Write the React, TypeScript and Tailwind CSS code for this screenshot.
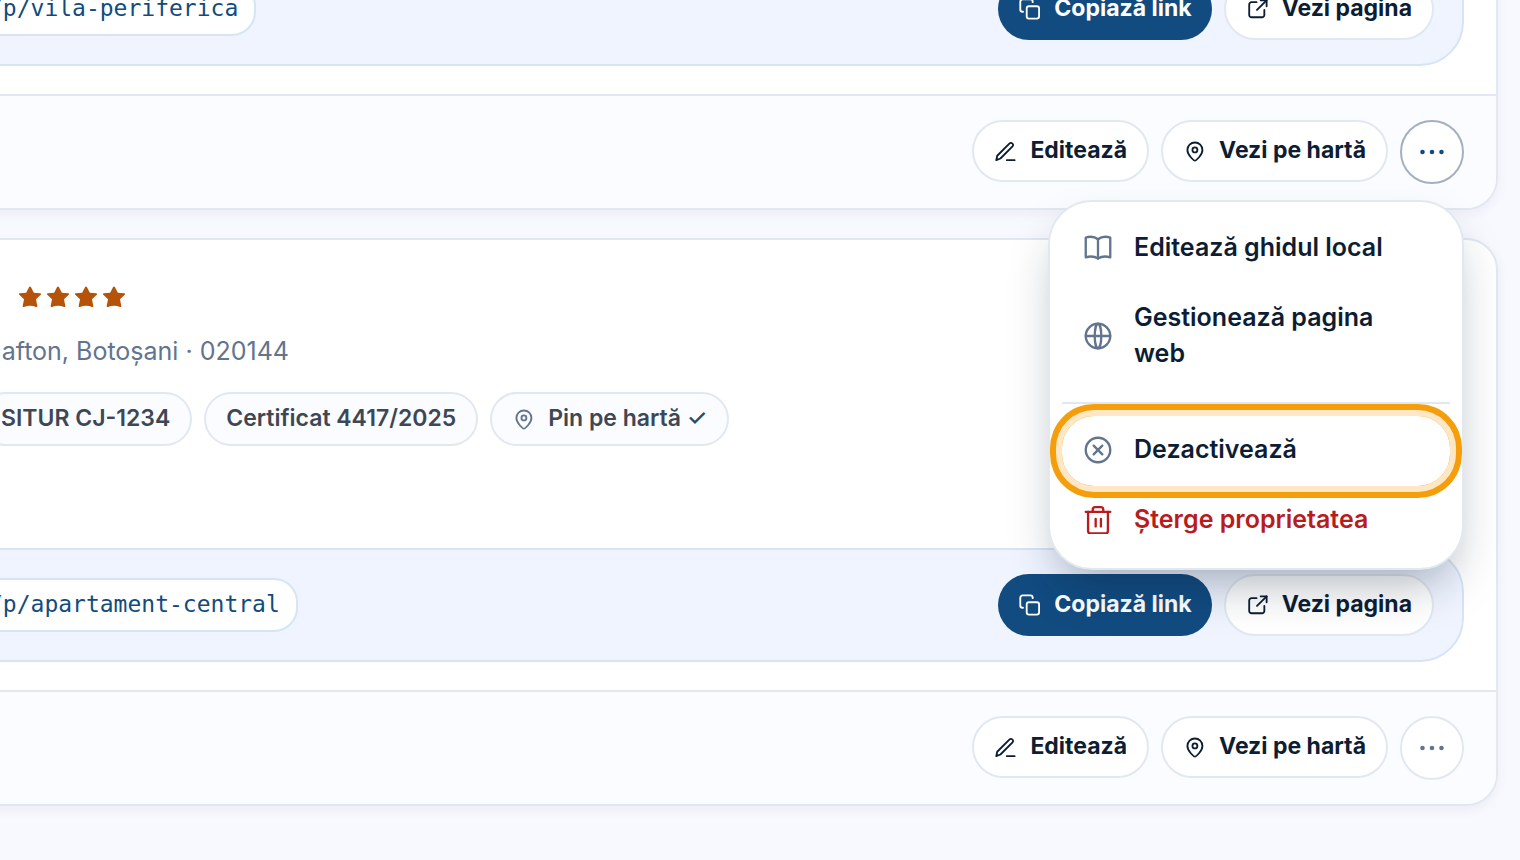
import type { ReactNode } from 'react';

type Property = {
  slug: string;
  stars: number;
  location: string;
  badges: string[];
  menuOpen: boolean;
};

type IconProps = {
  className?: string;
};

type ActionButtonProps = {
  icon: ReactNode;
  label: string;
  primary?: boolean;
};

type MenuItemProps = {
  icon: ReactNode;
  label: string;
  danger?: boolean;
  highlighted?: boolean;
};

const PROPERTIES: Property[] = [
  {
    slug: '/p/vila-periferica',
    stars: 0,
    location: '',
    badges: [],
    menuOpen: true,
  },
  {
    slug: '/p/apartament-central',
    stars: 4,
    location: 'Ungafton, Botoșani · 020144',
    badges: ['SITUR CJ-1234', 'Certificat 4417/2025'],
    menuOpen: false,
  },
];

function Icon({ className = '', children }: IconProps & { children: ReactNode }) {
  return (
    <svg
      className={`shrink-0 ${className}`}
      viewBox="0 0 24 24"
      fill="none"
      stroke="currentColor"
      strokeWidth="2"
      strokeLinecap="round"
      strokeLinejoin="round"
      aria-hidden="true"
    >
      {children}
    </svg>
  );
}

function PenIcon() {
  return (
    <Icon className="size-[22px]">
      <path d="M2.500 22l1-4.800L17 3.700a2 2 0 0 1 2.900 0l.3.300a2 2 0 0 1 0 2.900L7 20.200z" />
      <path d="M14 22h8.500" />
    </Icon>
  );
}

function PinIcon({ className = '' }: IconProps) {
  return (
    <Icon className={`size-[22px] ${className}`}>
      <path d="M13 22.500c-1.100 0-8.200-6-8.200-11.600a8.200 8.200 0 0 1 16.400 0C21.200 16.500 14.100 22.500 13 22.500z" />
      <circle cx="13" cy="10.800" r="2.700" />
    </Icon>
  );
}

function CopyIcon() {
  return (
    <Icon className="size-[22px]">
      <rect x="9.500" y="9" width="13.500" height="13.500" rx="2.500" />
      <path d="M5.500 15H5a2.500 2.500 0 0 1-2.500-2.500V4A2.500 2.500 0 0 1 5 1.500h8.500A2.500 2.500 0 0 1 16 4v.5" />
    </Icon>
  );
}

function ExternalIcon() {
  return (
    <Icon className="size-[22px]">
      <path d="M11.500 4.500H6A2.500 2.500 0 0 0 3.500 7v11.500A2.500 2.500 0 0 0 6 21h11.500a2.500 2.500 0 0 0 2.500-2.500V13" />
      <path d="M16 2.500h6.500V9" />
      <path d="M22.500 2.500L12 13" />
    </Icon>
  );
}

function DotsIcon() {
  return (
    <svg className="size-7" viewBox="0 0 28 28" fill="currentColor" aria-hidden="true">
      <circle cx="4.500" cy="14" r="2.300" />
      <circle cx="14" cy="14" r="2.300" />
      <circle cx="23.500" cy="14" r="2.300" />
    </svg>
  );
}

function StarIcon() {
  return (
    <svg className="size-[22px]" viewBox="0 0 24 24" fill="currentColor" aria-hidden="true">
      <path d="M12 .5c.5 0 .8.300 1.100.8l3.100 6 7 .7c.9.100 1.200 1 .5 1.600l-5.200 4.800 1.500 7.400c.1.900-.6 1.400-1.400 1.100-2.200-.9-4.400-1.300-6.600-1.300s-4.400.4-6.600 1.300c-.8.300-1.500-.2-1.400-1.100l1.500-7.400L.3 9.600C-.4 9-.1 8.100.8 8l7-.7 3.100-6c.3-.5.600-.8 1.100-.8z" />
    </svg>
  );
}

function BookIcon() {
  return (
    <Icon className="size-7">
      <path d="M12 4.500C9.500 2.500 5 2 1.500 3v17c3.500-1 8-.6 10.500 1 2.500-1.600 7-2 10.500-1V3C19 2 14.500 2.500 12 4.500z" />
      <path d="M12 4.500V21" />
    </Icon>
  );
}

function GlobeIcon() {
  return (
    <Icon className="size-7">
      <circle cx="12" cy="12" r="10.500" />
      <ellipse cx="12" cy="12" rx="2.800" ry="10.500" />
      <path d="M1.500 12h21" />
    </Icon>
  );
}

function CloseCircleIcon() {
  return (
    <Icon className="size-7">
      <circle cx="12" cy="12" r="10.500" />
      <path d="M8.300 8.300l7.400 7.400M15.700 8.300l-7.400 7.400" />
    </Icon>
  );
}

function TrashIcon() {
  return (
    <Icon className="size-7">
      <path d="M1.500 5h21" />
      <path d="M3.500 5v16.500a2 2 0 0 0 2 2h13a2 2 0 0 0 2-2V5" />
      <path d="M7.500 5V3a2 2 0 0 1 2-2h5a2 2 0 0 1 2 2v2" />
      <path d="M10 11v6.500M14.500 11v6.500" />
    </Icon>
  );
}

function ActionButton({ icon, label, primary = false }: ActionButtonProps) {
  return (
    <button
      type="button"
      className={`flex h-[62px] items-center gap-[14px] rounded-full px-5 text-[23px] leading-8 font-bold ${
        primary ? 'bg-[#114b80] text-white' : 'border-2 border-slate-200 bg-white text-[#0d1d33]'
      }`}
    >
      {icon}
      <span className="pb-0.5">{label}</span>
    </button>
  );
}

function Chip({ children }: { children: ReactNode }) {
  return (
    <span className="flex h-[54px] items-center gap-[14px] rounded-full border-2 border-slate-200 bg-[#fbfcff] px-5 text-[23px] leading-8 font-semibold text-[#3d4755]">
      {children}
    </span>
  );
}

function MenuItem({ icon, label, danger = false, highlighted = false }: MenuItemProps) {
  return (
    <button
      type="button"
      role="menuitem"
      className={`flex w-full items-center gap-[22px] rounded-4xl px-[22px] pt-[15px] pb-[17px] text-left text-[25px] leading-9 font-semibold ${
        danger ? 'text-[#b91c1c]' : 'text-[#0d1d33]'
      } ${highlighted ? 'shadow-[0_0_0_6px_#fde7c4,0_0_0_12px_#f59e0b]' : ''}`}
    >
      <span className={danger ? '' : 'text-slate-500'}>{icon}</span>
      <span className="pb-0.5">{label}</span>
    </button>
  );
}

function PropertyMenu() {
  return (
    <div
      role="menu"
      className="absolute top-full right-0 z-10 mt-4 w-[416px] rounded-[44px] border-2 border-slate-200 bg-white p-3 shadow-[0_24px_48px_-12px_rgba(13,29,51,0.34)]"
    >
      <MenuItem icon={<BookIcon />} label="Editează ghidul local" />
      <MenuItem icon={<GlobeIcon />} label="Gestionează pagina web" />
      <hr className="my-3 border-t-2 border-slate-200" />
      <MenuItem icon={<CloseCircleIcon />} label="Dezactivează" highlighted />
      <MenuItem icon={<TrashIcon />} label="Șterge proprietatea" danger />
    </div>
  );
}

function PropertyCard({ property }: { property: Property }) {
  return (
    <article className="rounded-4xl border-2 border-slate-200 bg-white shadow-[0_4px_12px_rgba(13,29,51,0.05)]">
      {/* Details */}
      {property.location && (
        <div className="pt-[46px] pb-[102px]">
          <div className="flex gap-1.5 pl-[127px] text-[#b45309]" role="img" aria-label={`${property.stars} stele`}>
            {Array.from({ length: property.stars }, (_, i) => (
              <StarIcon key={i} />
            ))}
          </div>
          <p className="mt-6 pl-[61px] text-[25px] leading-[38px] text-slate-500">{property.location}</p>
          <div className="mt-[22px] flex gap-3 pl-[87px]">
            {property.badges.map((badge) => (
              <Chip key={badge}>
                <span className="pb-0.5">{badge}</span>
              </Chip>
            ))}
            <Chip>
              <PinIcon className="text-slate-500" />
              <span className="pb-0.5">
                Pin pe hartă <span className="font-medium">✓</span>
              </span>
            </Chip>
          </div>
        </div>
      )}

      {/* Public link */}
      <div className="mr-8 mb-7 flex items-center justify-between rounded-[44px] border-2 border-[#d6e4f5] bg-[#eff4ff] py-6 pr-7 pl-[77px]">
        <span className="flex h-[54px] items-center rounded-3xl border-2 border-[#d6e4f5] bg-white px-4 pb-0.5 font-['DejaVu_Sans_Mono',monospace] text-[23px] text-[#114b80]">
          {property.slug}
        </span>
        <div className="flex gap-3">
          <ActionButton icon={<CopyIcon />} label="Copiază link" primary />
          <ActionButton icon={<ExternalIcon />} label="Vezi pagina" />
        </div>
      </div>

      {/* Actions */}
      <div className="flex justify-end gap-3 rounded-b-[30px] border-t-2 border-slate-200 bg-[#fbfcff] px-8 py-6">
        <ActionButton icon={<PenIcon />} label="Editează" />
        <ActionButton icon={<PinIcon />} label="Vezi pe hartă" />
        <div className="relative">
          <button
            type="button"
            aria-label="Mai multe acțiuni"
            aria-expanded={property.menuOpen}
            className={`flex size-16 items-center justify-center rounded-full border-2 bg-white ${
              property.menuOpen ? 'border-[#a3b0c2] text-[#114b80]' : 'border-slate-200 text-slate-500'
            }`}
          >
            <DotsIcon />
          </button>
          {property.menuOpen && <PropertyMenu />}
        </div>
      </div>
    </article>
  );
}

export default function App() {
  return (
    <div className="h-screen overflow-hidden bg-[#f8f9ff] font-['Inter',sans-serif]">
      <main className="-mt-[50px] -ml-[110px] flex flex-col gap-7 pr-[22px]">
        {PROPERTIES.map((property) => (
          <PropertyCard key={property.slug} property={property} />
        ))}
      </main>
    </div>
  );
}
